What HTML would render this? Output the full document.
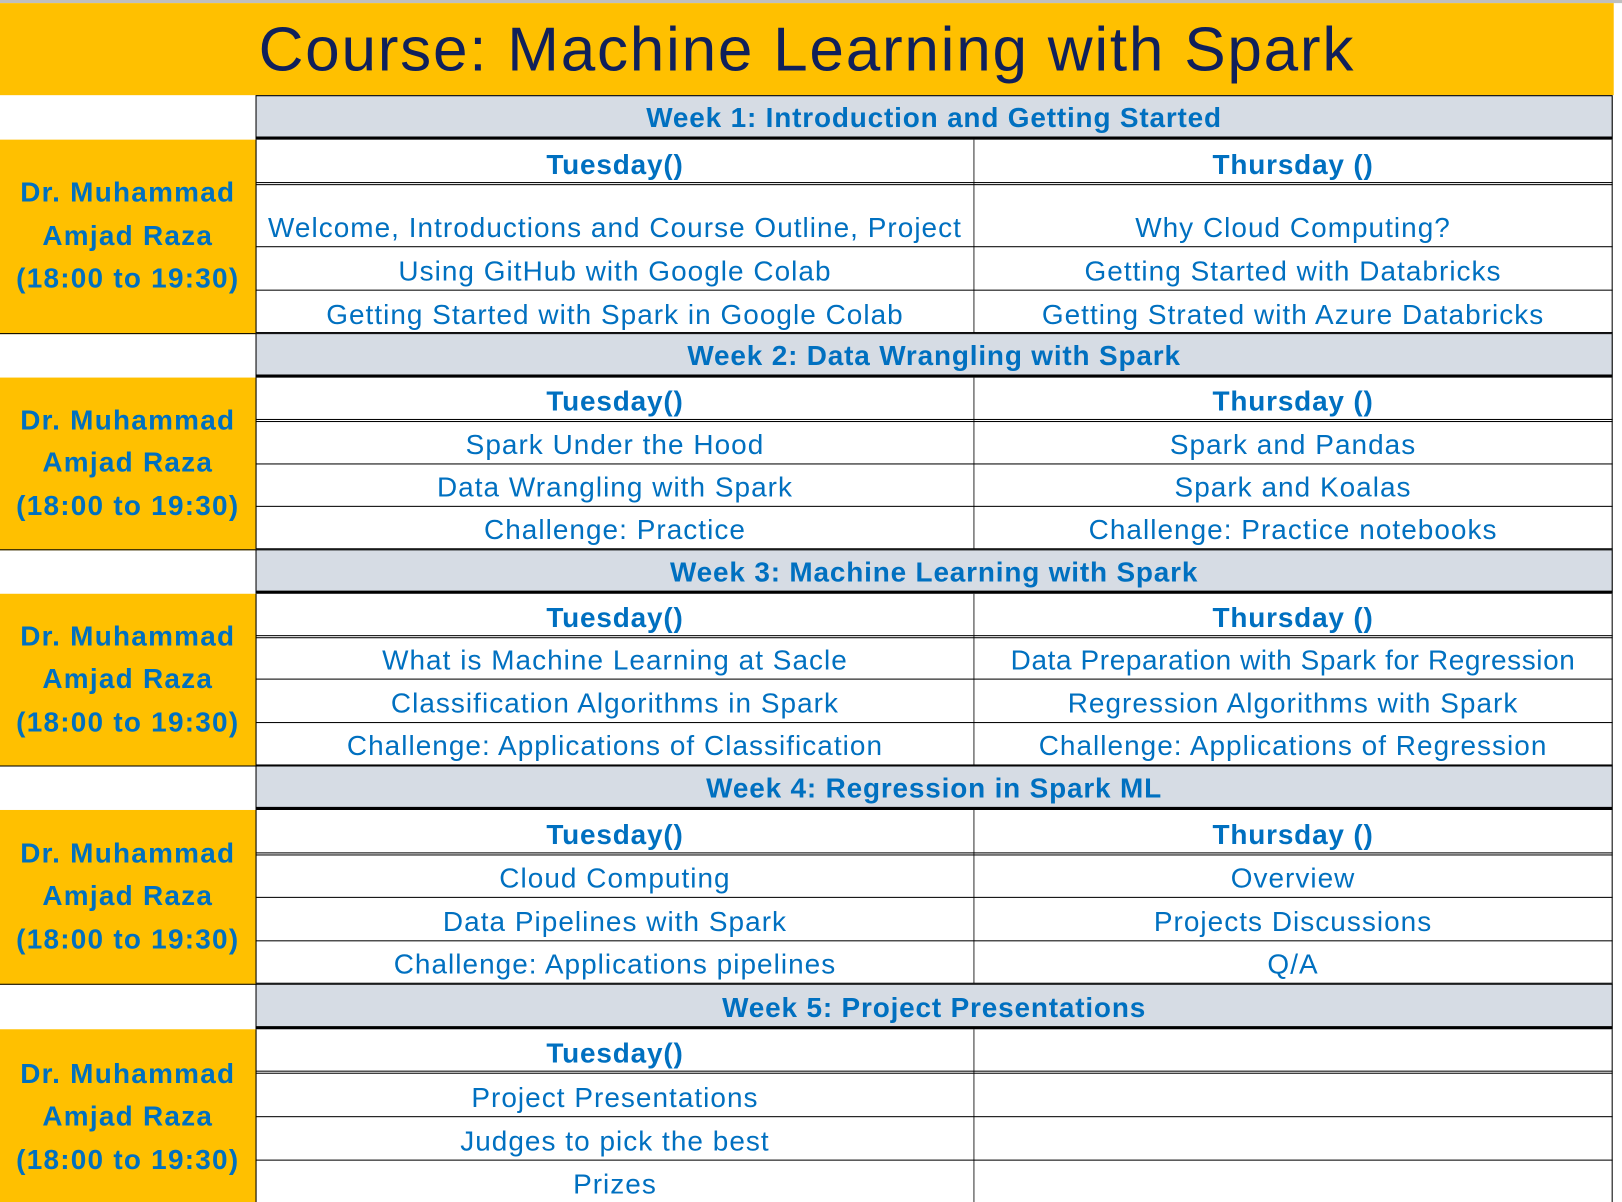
<!DOCTYPE html>
<html><head><meta charset="utf-8"><style>
html,body{margin:0;padding:0;background:#fff;overflow:hidden}
body{width:1622px;height:1202px;position:relative}
#w{position:absolute;left:0;top:0;width:1568px;height:1162px;transform:scale(1.03444);transform-origin:0 0;font-family:"Liberation Sans",sans-serif}
.a{position:absolute;box-sizing:border-box}
.t{position:absolute;display:flex;align-items:flex-end;justify-content:center;color:#0070c0;font-size:27px;white-space:nowrap;box-sizing:border-box;padding-bottom:2px;letter-spacing:1px}
.b{font-weight:bold;letter-spacing:0.8px}
.h{background:#d6dce4;border-top:1px solid #000;border-bottom:3px solid #000;border-left:1px solid #000;border-right:1px solid #000}
.y{background:#ffc000;color:#0070c0;font-weight:bold;font-size:27px;display:flex;flex-direction:column;justify-content:center;align-items:center;line-height:41.5px;border-bottom:1px solid #000;border-right:1px solid #000;letter-spacing:1.2px;white-space:nowrap}
.hl{position:absolute;left:247px;width:1312px;height:0;border-top:1px solid #000}
.vl{position:absolute;left:941px;width:0;border-left:1px solid #333}
</style></head><body><div id="w">
<div class="a" style="left:0;top:0;width:1568px;height:3px;background:#bfbfbf"></div>
<div class="a" style="left:0;top:3px;width:1560px;height:89px;background:#ffc000"></div>
<div class="t" style="left:0;top:3px;width:1560px;height:89px;color:#10205a;font-size:60px;padding-bottom:10px;letter-spacing:1.7px">Course: Machine Learning with Spark</div>

<div class="a" style="left:247px;top:93px;width:1px;height:1069px;background:#000"></div>
<div class="a" style="left:1558px;top:93px;width:1px;height:1069px;background:#000"></div>

<!-- Week 1 -->
<div class="a h" style="left:247px;top:92px;width:1312px;height:43px"></div>
<div class="t b" style="left:247px;top:92px;width:1312px;height:43px;padding-bottom:5px">Week 1: Introduction and Getting Started</div>
<div class="a y" style="left:0;top:135px;width:248px;height:188px"><div>Dr. Muhammad</div><div>Amjad Raza</div><div>(18:00 to 19:30)</div></div>
<div class="vl" style="top:135px;height:187px"></div>
<div class="hl" style="top:176px;border-top:3px double #000;height:3px"></div>
<div class="hl" style="top:238px"></div><div class="hl" style="top:280px"></div><div class="hl" style="top:321px;border-top-width:2px"></div>
<div class="t b" style="left:248px;top:135px;width:693px;height:42px">Tuesday()</div>
<div class="t b" style="left:942px;top:135px;width:616px;height:42px">Thursday ()</div>
<div class="t" style="left:248px;top:180px;width:693px;height:58px">Welcome, Introductions and Course Outline, Project</div>
<div class="t" style="left:942px;top:180px;width:616px;height:58px">Why Cloud Computing?</div>
<div class="t" style="left:248px;top:238px;width:693px;height:42px">Using GitHub with Google Colab</div>
<div class="t" style="left:942px;top:238px;width:616px;height:42px">Getting Started with Databricks</div>
<div class="t" style="left:248px;top:280px;width:693px;height:42px">Getting Started with Spark in Google Colab</div>
<div class="t" style="left:942px;top:280px;width:616px;height:42px">Getting Strated with Azure Databricks</div>

<!-- Week 2 -->
<div class="a h" style="left:247px;top:322px;width:1312px;height:43px"></div>
<div class="t b" style="left:247px;top:322px;width:1312px;height:43px;padding-bottom:5px">Week 2: Data Wrangling with Spark</div>
<div class="a y" style="left:0;top:365px;width:248px;height:167px"><div>Dr. Muhammad</div><div>Amjad Raza</div><div>(18:00 to 19:30)</div></div>
<div class="vl" style="top:365px;height:166px"></div>
<div class="hl" style="top:405px;border-top:3px double #000;height:3px"></div>
<div class="hl" style="top:448px"></div><div class="hl" style="top:489px"></div><div class="hl" style="top:530px;border-top-width:2px"></div>
<div class="t b" style="left:248px;top:365px;width:693px;height:41px">Tuesday()</div>
<div class="t b" style="left:942px;top:365px;width:616px;height:41px">Thursday ()</div>
<div class="t" style="left:248px;top:408px;width:693px;height:40px">Spark Under the Hood</div>
<div class="t" style="left:942px;top:408px;width:616px;height:40px">Spark and Pandas</div>
<div class="t" style="left:248px;top:448px;width:693px;height:41px">Data Wrangling with Spark</div>
<div class="t" style="left:942px;top:448px;width:616px;height:41px">Spark and Koalas</div>
<div class="t" style="left:248px;top:489px;width:693px;height:41px">Challenge: Practice</div>
<div class="t" style="left:942px;top:489px;width:616px;height:41px">Challenge: Practice notebooks</div>

<!-- Week 3 -->
<div class="a h" style="left:247px;top:531px;width:1312px;height:43px"></div>
<div class="t b" style="left:247px;top:531px;width:1312px;height:43px;padding-bottom:5px">Week 3: Machine Learning with Spark</div>
<div class="a y" style="left:0;top:574px;width:248px;height:167px"><div>Dr. Muhammad</div><div>Amjad Raza</div><div>(18:00 to 19:30)</div></div>
<div class="vl" style="top:574px;height:166px"></div>
<div class="hl" style="top:614px;border-top:3px double #000;height:3px"></div>
<div class="hl" style="top:656px"></div><div class="hl" style="top:698px"></div><div class="hl" style="top:739px;border-top-width:2px"></div>
<div class="t b" style="left:248px;top:574px;width:693px;height:41px">Tuesday()</div>
<div class="t b" style="left:942px;top:574px;width:616px;height:41px">Thursday ()</div>
<div class="t" style="left:248px;top:617px;width:693px;height:39px">What is Machine Learning at Sacle</div>
<div class="t" style="left:942px;top:617px;width:616px;height:39px;letter-spacing:0.6px">Data Preparation with Spark for Regression</div>
<div class="t" style="left:248px;top:656px;width:693px;height:42px">Classification Algorithms in Spark</div>
<div class="t" style="left:942px;top:656px;width:616px;height:42px">Regression Algorithms with Spark</div>
<div class="t" style="left:248px;top:698px;width:693px;height:41px">Challenge: Applications of Classification</div>
<div class="t" style="left:942px;top:698px;width:616px;height:41px">Challenge: Applications of Regression</div>

<!-- Week 4 -->
<div class="a h" style="left:247px;top:740px;width:1312px;height:43px"></div>
<div class="t b" style="left:247px;top:740px;width:1312px;height:43px;padding-bottom:5px">Week 4: Regression in Spark ML</div>
<div class="a y" style="left:0;top:783px;width:248px;height:169px"><div>Dr. Muhammad</div><div>Amjad Raza</div><div>(18:00 to 19:30)</div></div>
<div class="vl" style="top:783px;height:168px"></div>
<div class="hl" style="top:824px;border-top:3px double #000;height:3px"></div>
<div class="hl" style="top:867px"></div><div class="hl" style="top:909px"></div><div class="hl" style="top:950px;border-top-width:2px"></div>
<div class="t b" style="left:248px;top:783px;width:693px;height:42px">Tuesday()</div>
<div class="t b" style="left:942px;top:783px;width:616px;height:42px">Thursday ()</div>
<div class="t" style="left:248px;top:827px;width:693px;height:40px">Cloud Computing</div>
<div class="t" style="left:942px;top:827px;width:616px;height:40px">Overview</div>
<div class="t" style="left:248px;top:867px;width:693px;height:42px">Data Pipelines with Spark</div>
<div class="t" style="left:942px;top:867px;width:616px;height:42px">Projects Discussions</div>
<div class="t" style="left:248px;top:909px;width:693px;height:41px">Challenge: Applications pipelines</div>
<div class="t" style="left:942px;top:909px;width:616px;height:41px">Q/A</div>

<!-- Week 5 -->
<div class="a h" style="left:247px;top:951px;width:1312px;height:44px"></div>
<div class="t b" style="left:247px;top:951px;width:1312px;height:44px;padding-bottom:5px">Week 5: Project Presentations</div>
<div class="a y" style="left:0;top:995px;width:248px;height:170px;border-bottom:none"><div>Dr. Muhammad</div><div>Amjad Raza</div><div>(18:00 to 19:30)</div></div>
<div class="vl" style="top:995px;height:167px"></div>
<div class="hl" style="top:1035px;border-top:3px double #000;height:3px"></div>
<div class="hl" style="top:1079px"></div><div class="hl" style="top:1121px"></div>
<div class="t b" style="left:248px;top:995px;width:693px;height:41px">Tuesday()</div>
<div class="t" style="left:248px;top:1038px;width:693px;height:41px">Project Presentations</div>
<div class="t" style="left:248px;top:1079px;width:693px;height:42px">Judges to pick the best</div>
<div class="t" style="left:248px;top:1121px;width:693px;height:41px;padding-bottom:1px">Prizes</div>
</div></body></html>
